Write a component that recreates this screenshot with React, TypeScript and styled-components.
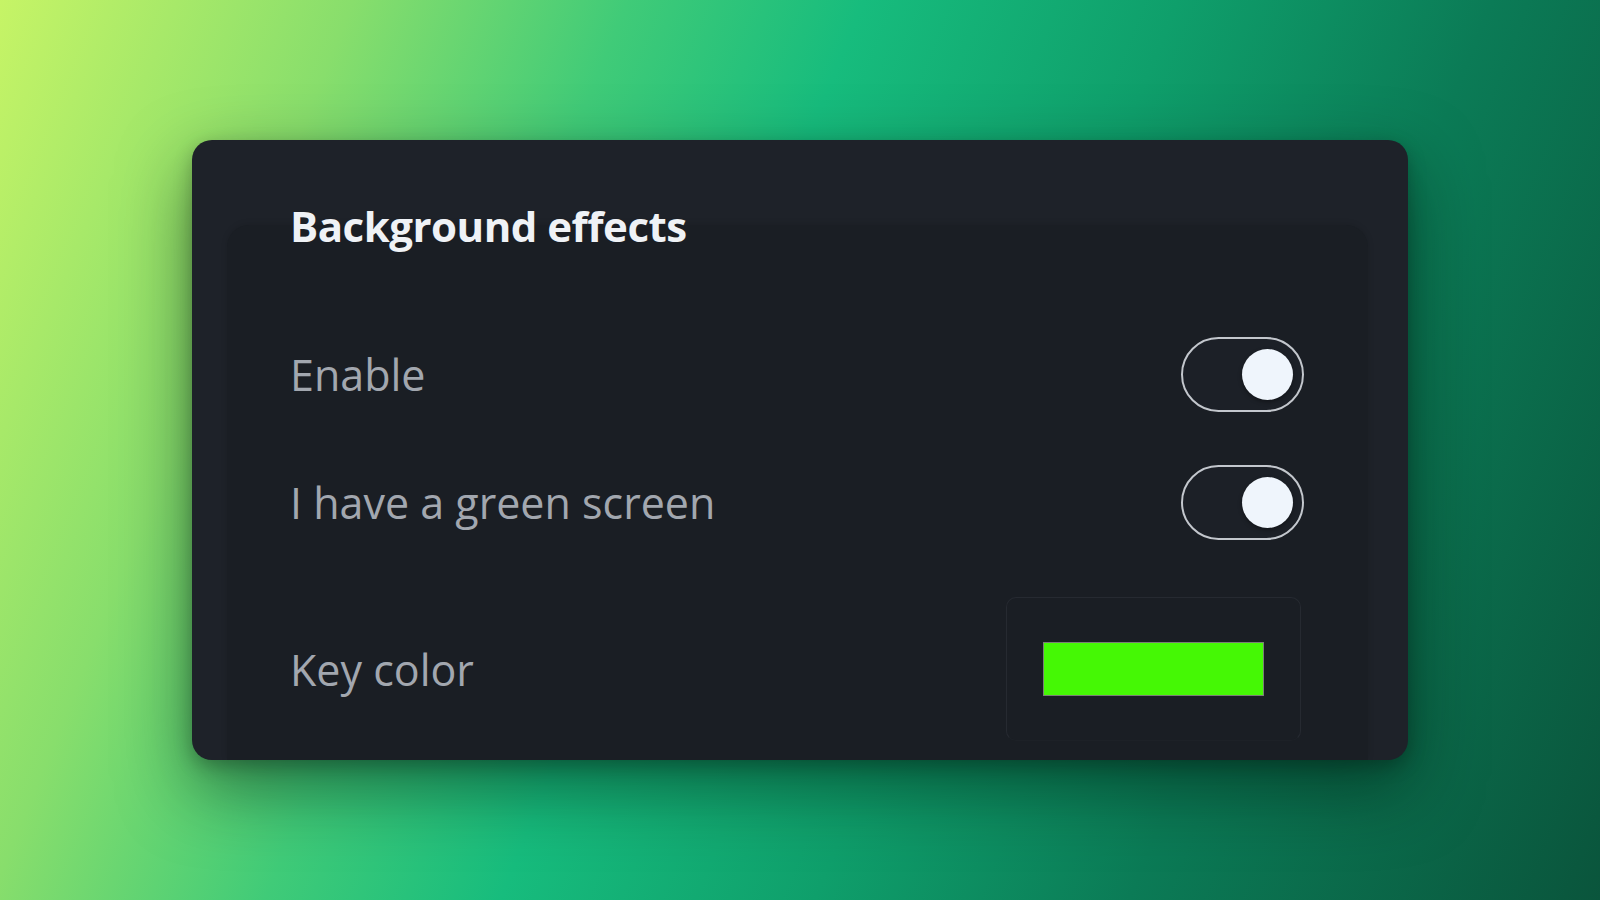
import styled, { createGlobalStyle } from 'styled-components'

// 背景特效设置卡片

const GlobalStyle = createGlobalStyle`
  html, body {
    margin: 0;
    padding: 0;
    height: 100%;
  }

  body {
    font-family: "Open Sans", "Noto Sans", sans-serif;
    overflow: hidden;
  }
`

type Setting = {
  label: string
  on: boolean
}

const settings: Setting[] = [
  { label: 'Enable', on: true },
  { label: 'I have a green screen', on: true },
]

const App = () => {
  return (
    <>
      <GlobalStyle/>
      <Backdrop>
        <Card>
          <Panel>
            <Title>Background effects</Title>
            <Rows>
              {settings.map(item => (
                <Row key={item.label}>
                  <Label>{item.label}</Label>
                  <Toggle $on={item.on} role="switch" aria-checked={item.on}>
                    <Knob/>
                  </Toggle>
                </Row>
              ))}
              <Row $spaced>
                <Label>Key color</Label>
                <Picker>
                  <Swatch $color="#45f805"/>
                </Picker>
              </Row>
            </Rows>
          </Panel>
        </Card>
      </Backdrop>
    </>
  )
}

const Backdrop = styled.main`
  width: 1600px;
  height: 900px;
  box-sizing: border-box;
  padding: 140px 192px 0;
  background: linear-gradient(112deg, #c6f466 0%, #88de6c 18%, #40cb78 32%, #17bc7d 44%, #0f9f6b 60%, #0b7b56 76%, #0a553c 100%);
`

const Card = styled.section`
  width: 1216px;
  height: 620px;
  box-sizing: border-box;
  padding: 85px 40px 0 35px;
  border-radius: 20px;
  background: #1e2229;
  overflow: hidden;
  box-shadow: 0 28px 70px rgba(0, 24, 14, 0.5), 0 6px 18px rgba(0, 0, 0, 0.25);
`

const Panel = styled.div`
  display: flow-root;
  height: 100%;
  box-sizing: border-box;
  padding: 0 64px 0 63px;
  border-radius: 22px 22px 0 0;
  background: #1a1e24;
  box-shadow: 0 -1px 6px rgba(0, 0, 0, 0.12);
`

const Title = styled.h1`
  margin: -20px 0 0;
  font-size: 42px;
  line-height: 42px;
  font-weight: 700;
  letter-spacing: -0.5px;
  color: #eff2f6;
`

const Rows = styled.div`
  display: flex;
  flex-direction: column;
  gap: 53px;
  margin-top: 90px;
`

const Row = styled.div<{ $spaced?: boolean }>`
  display: flex;
  align-items: center;
  justify-content: space-between;
  margin-top: ${p => (p.$spaced ? '4px' : '0')};
`

const Label = styled.span`
  font-size: 43px;
  line-height: 1;
  font-weight: 400;
  color: #a2a7af;
`

const Toggle = styled.div<{ $on: boolean }>`
  display: flex;
  align-items: center;
  justify-content: ${p => (p.$on ? 'flex-end' : 'flex-start')};
  width: 123px;
  height: 75px;
  box-sizing: border-box;
  padding: 0 9px;
  border: 2.5px solid #c3c7cd;
  border-radius: 40px;
  background: #1c2027;
`

const Knob = styled.span`
  width: 51px;
  height: 51px;
  border-radius: 50%;
  background: #eff5fc;
  box-shadow: 0 2px 4px rgba(0, 0, 0, 0.35);
`

const Picker = styled.div`
  display: flex;
  align-items: center;
  justify-content: center;
  width: 295px;
  height: 144px;
  box-sizing: border-box;
  margin-right: 3px;
  border: 1.5px solid #262a31;
  border-bottom-color: #1d2127;
  border-radius: 10px;
  background: #1a1e24;
`

const Swatch = styled.div<{ $color: string }>`
  width: 221px;
  height: 54px;
  border: 1.5px solid #7a7f76;
  box-sizing: border-box;
  background: ${p => p.$color};
`

export default App
